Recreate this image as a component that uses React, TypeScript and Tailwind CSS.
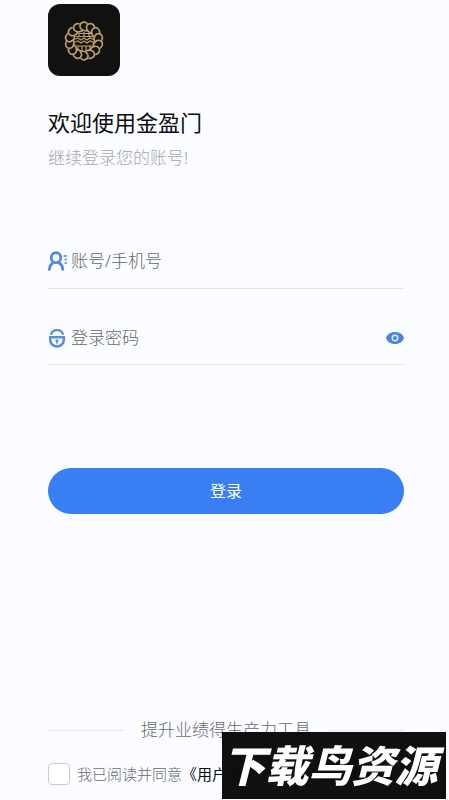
import { useState } from "react";

const petals = Array.from({ length: 14 }, (_, i) => (i * 360) / 14);

function Logo() {
  return (
    <svg viewBox="0 0 72 72" className="size-[72px] rounded-xl bg-[#111110]" role="img" aria-label="金盈门">
      <defs>
        <linearGradient id="gold" gradientUnits="userSpaceOnUse" x1="16" y1="36" x2="56" y2="36">
          <stop offset="0" stopColor="#93713f" />
          <stop offset="0.5" stopColor="#b89d6c" />
          <stop offset="1" stopColor="#d9bf82" />
        </linearGradient>
      </defs>
      <g fill="none" stroke="#bd9f66" strokeWidth="1.7" strokeLinecap="round">
        {petals.map((angle) => (
          <path
            key={angle}
            d="M38.500 27C34.500 27 31.500 24.500 32 21.500C32.500 18.200 36.500 17.300 39 19.300"
            transform={`rotate(${angle} 36 37)`}
          />
        ))}
      </g>
      <g fill="none" stroke="url(#gold)" strokeWidth="1.200">
        <path d="M29 29.500h14M28 32.500h16M31 29v3M36 28v4M41 29v3" />
        <path d="M26 35.500l4-1.500 3 2 3-2 3 2 3-2 4 1.500M26 38.500l4-1.500 3 2 3-2 3 2 3-2 4 1.500" />
        <path d="M28 42h16M30 42v5M34 42v5M38 42v5M42 42v5M29 46.500h5M38 46.500h5" />
      </g>
    </svg>
  );
}

function UserIcon() {
  return (
    <svg viewBox="0 0 20 20" className="size-5 shrink-0" fill="none" stroke="#4b8ad6" aria-hidden="true">
      <ellipse cx="8" cy="6.700" rx="4.800" ry="5" strokeWidth="2.700" />
      <path d="M1.400 19.500c0-4 1.400-6.500 4-7.700M14.800 19.500c0-4-1.400-6.500-4.200-7.700" strokeWidth="2.800" />
      <path d="M15.500 5H19M16.500 8.500H19M16.500 12H19" strokeWidth="1.300" />
    </svg>
  );
}

function LockIcon() {
  return (
    <svg viewBox="0 0 20 20" className="size-5 shrink-0" fill="none" stroke="#5a90d8" aria-hidden="true">
      <path d="M3 6.800C3.500 3.800 6 2.100 9 2.100S14.500 3.800 15 6.800" strokeWidth="2.400" />
      <path d="M2.200 9.300h13.600v2.500a6.800 6.600 0 0 1-13.600 0z" strokeWidth="2.600" />
      <path d="M9 11.500v4M7.500 12.500h3" strokeWidth="1.800" />
    </svg>
  );
}

function EyeIcon() {
  return (
    <svg viewBox="0 0 18 12" className="h-3 w-[18px]" aria-hidden="true">
      <path d="M0 6C1 2.300 4.500 0 9 0S17 2.300 18 6c-1 3.700-4.500 6-9 6S1 9.700 0 6z" fill="#4b85d8" />
      <circle cx="9" cy="6" r="2.700" fill="#4b85d8" stroke="#dcebff" strokeWidth="1.500" />
    </svg>
  );
}

export default function App() {
  const [showPassword, setShowPassword] = useState(false);

  return (
    <div className="flex min-h-screen flex-col bg-[#fafcff] pt-1 pr-[45px] pb-[14px] pl-12 font-['Noto_Sans','Noto_Sans_CJK_SC',sans-serif]">
      <header>
        <Logo />
        <h1 className="mt-[30px] text-[22px] leading-8 text-[#0b0d10]">欢迎使用金盈门</h1>
        <p className="mt-2 text-[17px] leading-6 font-light text-[#a6a8ac]">继续登录您的账号!</p>
      </header>

      <form className="mt-16" onSubmit={(e) => e.preventDefault()}>
        <label className="flex h-[55px] items-center gap-[3px] border-b border-[#e2e4e9]">
          <UserIcon />
          <input
            type="text"
            aria-label="账号/手机号"
            placeholder="账号/手机号"
            className="min-w-0 flex-1 bg-transparent text-[17px] font-light outline-none placeholder:text-[#66686c]"
          />
        </label>
        <div className="mt-[22px] flex h-[54px] items-center border-b border-[#e2e4e9]">
          <label className="flex min-w-0 flex-1 items-center gap-[3px]">
            <LockIcon />
            <input
              type={showPassword ? "text" : "password"}
              aria-label="登录密码"
              placeholder="登录密码"
              className="min-w-0 flex-1 bg-transparent text-[17px] font-light outline-none placeholder:text-[#66686c]"
            />
          </label>
          <button type="button" aria-label="显示密码" onClick={() => setShowPassword(!showPassword)}>
            <EyeIcon />
          </button>
        </div>
        <button type="submit" className="mt-[103px] h-[46px] w-full rounded-full bg-[#397ef3] text-base text-white">
          登录
        </button>
      </form>

      <footer className="mt-auto">
        <div className="flex items-center gap-4">
          <span className="h-px flex-1 bg-[#e6e8ec]" />
          <p className="text-[17px] leading-6 font-light text-[#696b6f]">提升业绩得生产力工具</p>
          <span className="h-px flex-1 bg-[#e6e8ec]" />
        </div>
        <div className="mt-5 flex items-center whitespace-nowrap text-[15px] leading-6">
          <label className="flex items-center gap-[7px] font-light text-[#696b6f]">
            <input
              type="checkbox"
              className="size-[22px] appearance-none rounded-[4px] border border-[#c9cbd0] bg-white checked:bg-[#397ef3]"
            />
            我已阅读并同意
          </label>
          <a href="#terms" className="text-[#0b0d10]">《用户协议》</a>
          <span className="text-[#77797d]">和</span>
          <a href="#privacy" className="text-[#0b0d10]">《隐私政策》</a>
        </div>
      </footer>

      {/* Source badge pinned over the footer */}
      <div className="fixed right-[3px] bottom-px flex h-[67px] w-56 items-center justify-center bg-[#0b0b0b]/98 pr-2 pb-1 font-['Noto_Sans_CJK_SC',sans-serif] text-[43px] leading-none font-black whitespace-nowrap text-white italic">
        下载鸟资源
      </div>
    </div>
  );
}
